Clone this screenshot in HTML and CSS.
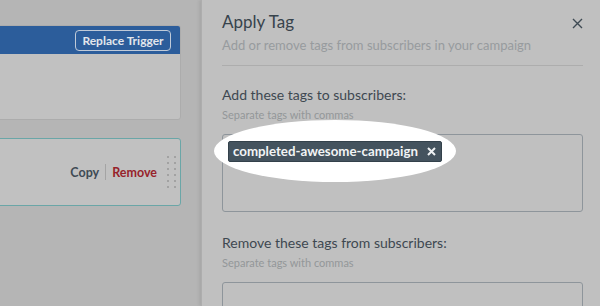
FILE: index.html
```html
<!DOCTYPE html>
<html lang="en">
  <head>
    <meta charset="UTF-8" />
    <meta name="viewport" content="width=device-width, initial-scale=1.0" />
    <title>Apply Tag</title>
    <link rel="stylesheet" href="styles.css">
  </head>
  <body>
    <div class="workflow">
      <div class="card trigger">
        <div class="card-head">
          <button class="replace-btn">Replace Trigger</button>
        </div>
        <div class="card-body"></div>
      </div>
      <div class="card action">
        <div class="actions">
          <a class="copy">Copy</a>
          <span class="sep"></span>
          <a class="remove">Remove</a>
        </div>
        <div class="grip">
          <span></span><span></span><span></span><span></span><span></span><span></span>
          <span></span><span></span><span></span><span></span><span></span><span></span>
        </div>
      </div>
    </div>

    <div class="panel">
      <div class="panel-head">
        <h2>Apply Tag</h2>
        <p class="sub">Add or remove tags from subscribers in your campaign</p>
        <button class="close" aria-label="Close">
          <svg width="11" height="11" viewBox="0 0 11 11">
            <path d="M1 1L10 10M10 1L1 10" stroke="#3e4a53" stroke-width="1.4" fill="none" />
          </svg>
        </button>
      </div>

      <div class="field">
        <label>Add these tags to subscribers:</label>
        <span class="hint">Separate tags with commas</span>
        <div class="tag-box">
          <div class="spotlight"></div>
          <span class="tag">completed-awesome-campaign
            <svg class="tag-x" width="9" height="9" viewBox="0 0 9 9">
              <path d="M1 1L8 8M8 1L1 8" stroke="#eef1f3" stroke-width="2" fill="none" />
            </svg>
          </span>
        </div>
      </div>

      <div class="field">
        <label>Remove these tags from subscribers:</label>
        <span class="hint">Separate tags with commas</span>
        <div class="tag-box"></div>
      </div>
    </div>
  </body>
</html>
```

FILE: styles.css
```css
body {
  margin: 0;
  height: 306px;
  overflow: hidden;
  display: flex;
  background: #b5b5b5;
  font-family: "Lato", "Open Sans", sans-serif;
}
.workflow {
  width: 201px;
  padding-top: 25px;
}
.card {
  margin-left: -20px;
  width: 201px;
  background: #c1c1c1;
  border-radius: 3px;
  box-sizing: border-box;
}
.trigger {
  border: 1px solid #acacac;
  overflow: hidden;
}
.card-head {
  height: 28px;
  background: #2c5d9b;
  display: flex;
  align-items: center;
  justify-content: flex-end;
  padding-right: 9px;
}
.replace-btn {
  background: transparent;
  color: #e2e6ec;
  border: 1px solid #c0cad8;
  border-radius: 4px;
  font-family: inherit;
  font-weight: bold;
  font-size: 12px;
  padding: 1px 5px;
  width: 96px;
  height: 21px;
}
.card-body {
  height: 65px;
}
.action {
  margin-top: 18px;
  height: 68px;
  border: 1px solid #6aa6a7;
  display: flex;
  align-items: center;
  justify-content: flex-end;
  padding-right: 4px;
}
.actions {
  display: flex;
  align-items: center;
  font-size: 12.5px;
  font-weight: bold;
}
.copy {
  color: #3f4b55;
}
.sep {
  width: 1px;
  height: 16px;
  background: #a4a4a4;
  margin: 0 6px;
}
.remove {
  color: #97232b;
}
.grip {
  display: grid;
  grid-template-columns: 2px 2px;
  column-gap: 5px;
  row-gap: 4px;
  margin-left: 10px;
}
.grip span {
  width: 2px;
  height: 2px;
  background: #a2a2a2;
}
.panel {
  flex: 1;
  background: #c0c0c0;
  border-left: 1px solid #adadad;
  box-shadow: -2px 0 3px rgba(0, 0, 0, 0.08);
  padding: 0 17px 0 20px;
}
.panel-head {
  position: relative;
  padding-top: 10px;
  padding-bottom: 11px;
  border-bottom: 1px solid #adadad;
}
h2 {
  margin: 0;
  font-size: 17px;
  font-weight: normal;
  color: #37434c;
  line-height: 24px;
}
.sub {
  margin: 2px 0 0;
  font-size: 13px;
  color: #979b9e;
  line-height: 18px;
}
.close {
  position: absolute;
  right: 0;
  top: 17px;
  background: none;
  border: none;
  padding: 0;
}
.field {
  padding-top: 18px;
  display: flex;
  flex-direction: column;
}
.field + .field {
  padding-top: 20px;
}
.field label {
  font-size: 14px;
  color: #3e4851;
  line-height: 22px;
}
.hint {
  font-size: 11px;
  color: #939799;
  line-height: 16px;
  margin-top: 1px;
}
.tag-box {
  position: relative;
  box-sizing: border-box;
  margin-top: 11px;
  height: 78px;
  border: 1px solid #8e959b;
  border-radius: 3px;
  padding: 5px;
}
.spotlight {
  position: absolute;
  left: -9px;
  top: -15px;
  width: 242px;
  height: 62px;
  background: #ffffff;
  border-radius: 50%;
}
.tag {
  position: relative;
  display: inline-flex;
  align-items: center;
  height: 21px;
  box-sizing: border-box;
  background: #44535e;
  border: 1px solid #33414b;
  border-radius: 2px;
  color: #f2f4f5;
  font-weight: bold;
  font-size: 13.3px;
  padding: 0 5px 0 4px;
}
.tag-x {
  margin-left: 9px;
}
```
